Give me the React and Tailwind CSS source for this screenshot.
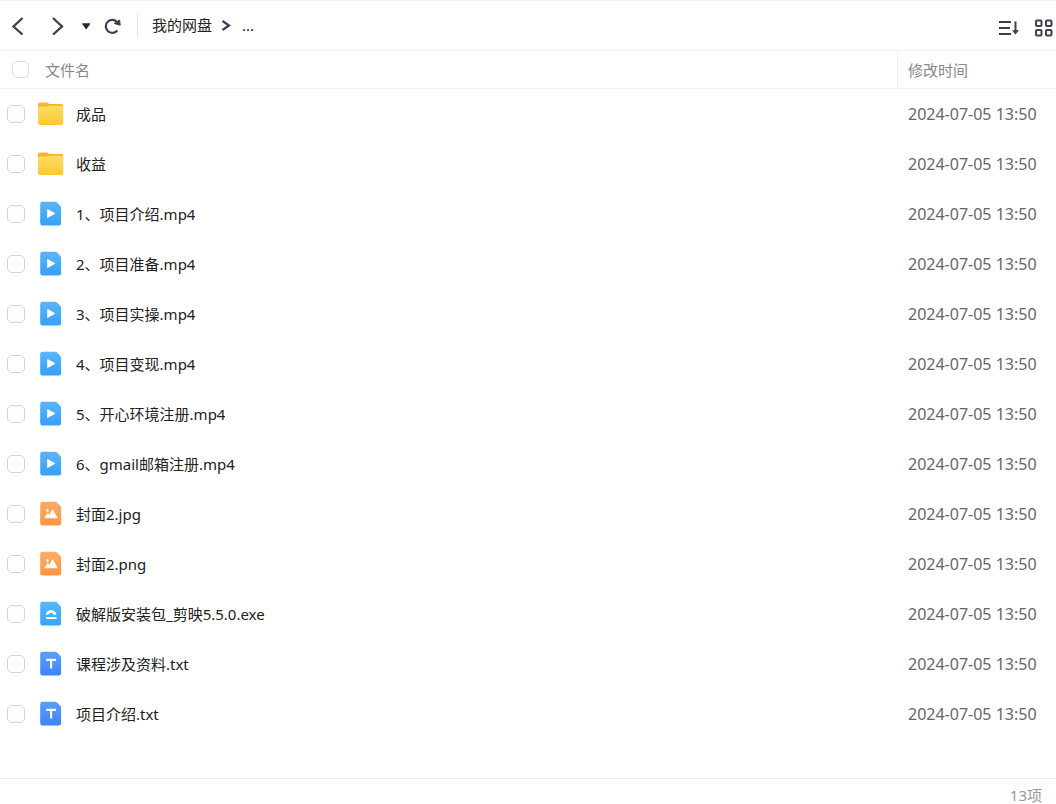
const files = [
    { name: "成品", type: "folder" },
    { name: "收益", type: "folder" },
    { name: "1、项目介绍.mp4", type: "video" },
    { name: "2、项目准备.mp4", type: "video" },
    { name: "3、项目实操.mp4", type: "video" },
    { name: "4、项目变现.mp4", type: "video" },
    { name: "5、开心环境注册.mp4", type: "video" },
    { name: "6、gmail邮箱注册.mp4", type: "video" },
    { name: "封面2.jpg", type: "image" },
    { name: "封面2.png", type: "image" },
    { name: "破解版安装包_剪映5.5.0.exe", type: "exe" },
    { name: "课程涉及资料.txt", type: "text" },
    { name: "项目介绍.txt", type: "text" },
];

const modified = "2024-07-05 13:50";

const pageColors = {
    video: ["#5ab5fd", "#36a0fa"],
    image: ["#ffac68", "#fd9343"],
    exe: ["#56b8ff", "#38a5fb"],
    text: ["#5b9dfb", "#3a86f6"],
};

const FolderIcon = () => (
    <svg className="h-7 w-7" viewBox="0 0 28 28" aria-hidden="true">
        <defs>
            <linearGradient id="folder" x1="0" y1="0" x2="0" y2="1">
                <stop offset="0" stopColor="#ffdc63" />
                <stop offset="1" stopColor="#fdc832" />
            </linearGradient>
        </defs>
        <path d="M3 2.500h6.600q1 0 1.700.7l.8.8h12q2 0 2 2V12H1V4.500q0-2 2-2Z" fill="#f3b527" />
        <path d="M1 8q0-1.500 1.400-1.500h7.200q.8 0 1.400-.4.600-.4 1.400-.4h11.900q1.900 0 1.900 1.900v15.200q0 2.200-2.200 2.200H3.200Q1 25 1 22.800Z" fill="url(#folder)" />
    </svg>
);

// A sheet with a cut corner, the glyph on it depends on the type
const PageIcon = ({ type }) => (
    <svg className="h-7 w-7" viewBox="0 0 28 28" aria-hidden="true">
        <defs>
            <linearGradient id={type} x1="0" y1="0" x2="0" y2="1">
                <stop offset="0" stopColor={pageColors[type][0]} />
                <stop offset="1" stopColor={pageColors[type][1]} />
            </linearGradient>
        </defs>
        <path d="M5.500 1.800h12.800q1 0 1.700.7l3.400 3.500q.7.700.7 1.700v15.300q0 2.500-2.500 2.500h-16Q3.200 25.500 3.200 23V4.200q0-2.400 2.300-2.400Z" fill={`url(#${type})`} />
        {type === "video" && <path d="M10.200 9.700v7.600q0 .9.800.4l6.800-3.700q.8-.5 0-1L11 9.300q-.8-.5-.8.400Z" fill="#fff" />}
        {type === "image" && (
            <g fill="#fff" opacity=".95">
                <circle cx="10.500" cy="10.500" r="1.400" />
                <path d="M8 18.200q-.8 0-.4-.7l2.600-4.200q.5-.7 1 0l1 1.400 2.900-5q.6-.8 1.100 0l4.200 7.800q.3.700-.5.700Z" />
            </g>
        )}
        {type === "exe" && (
            <g fill="none" stroke="#fff" strokeWidth="2" strokeLinejoin="round">
                <path d="M9 14.300h2.200a3 3 0 0 1 5.600 0H19a5.200 5.200 0 0 0-10 0Z" strokeWidth="1" fill="#fff" />
                <path d="M9 18h10.500" />
            </g>
        )}
        {type === "text" && <path d="M9.200 9.800h9.800M14.100 9.800v8.700" fill="none" stroke="#fff" strokeWidth="2.200" />}
    </svg>
);

const Checkbox = ({ label, className }) => (
    <input
        type="checkbox"
        aria-label={label}
        className={`${className} block shrink-0 appearance-none rounded-[5px] border bg-white checked:bg-blue-500`}
    />
);

const Toolbar = () => (
    <header className="flex h-[51px] shrink-0 items-center justify-between border-y border-[#f0f0f2] text-[#3b4150]">
        <nav className="flex items-center pb-0.5">
            <button type="button" aria-label="后退" className="ml-2 h-5 w-5">
                <svg viewBox="0 0 20 20" fill="none" stroke="currentColor" strokeWidth="2.300">
                    <path d="M14.500 3 5.500 11.500l9 8" />
                </svg>
            </button>
            <button type="button" aria-label="前进" className="ml-5 h-5 w-5">
                <svg viewBox="0 0 20 20" fill="none" stroke="currentColor" strokeWidth="2.300">
                    <path d="M5 3l9 8.500-9 8" />
                </svg>
            </button>
            <button type="button" aria-label="历史记录" className="ml-2 h-5 w-5 text-[#222631]">
                <svg viewBox="0 0 20 20" fill="currentColor">
                    <path d="M6.500 8.300h7.400q.6 0 .2.600l-3.300 4.900q-.6.700-1.200 0L6.300 8.900q-.4-.6.2-.6Z" />
                </svg>
            </button>
            <button type="button" aria-label="刷新" className="ml-1.5 h-5 w-5">
                <svg viewBox="0 0 20 20" fill="none" stroke="currentColor" strokeWidth="2.200">
                    <path d="M15.300 15.500a6.500 6.500 0 1 1 .2-8" />
                    <path d="M12.300 8.500 17.600 5l.6 5.200Z" fill="currentColor" stroke="currentColor" strokeWidth="1" strokeLinejoin="round" />
                </svg>
            </button>
            <span className="ml-[15px] h-6 w-px bg-[#e4e5e8]" />
            <a href="#root" className="ml-3.5 text-[15px] leading-6 text-[#222]">我的网盘</a>
            <svg className="mx-2 h-3.5 w-3.5" viewBox="0 0 14 14" fill="none" stroke="currentColor" strokeWidth="2.200">
                <path d="M2.500 3l6.500 4.500L2.500 12" />
            </svg>
            <a href="#up" className="text-[15px] leading-6 text-[#222]">...</a>
        </nav>
        <div className="flex items-center gap-3.5 pt-1">
            <button type="button" aria-label="排序" className="h-5 w-6">
                <svg viewBox="0 0 24 20" fill="none" stroke="currentColor" strokeWidth="2">
                    <path d="M3 4h12M3 10h11M3 16h12M19.500 3.500v10" />
                    <path d="M16 12.300h7l-3.500 4.200Z" fill="currentColor" stroke="none" />
                </svg>
            </button>
            <button type="button" aria-label="网格视图" className="mr-0.5 h-5 w-5">
                <svg viewBox="0 0 20 20" fill="none" stroke="currentColor" strokeWidth="2">
                    <rect x="2" y="2.500" width="5.500" height="5.500" rx="1" />
                    <rect x="12" y="2.500" width="5.500" height="5.500" rx="1" />
                    <rect x="2" y="12" width="5.500" height="5.500" rx="1" />
                    <rect x="12" y="12" width="5.500" height="5.500" rx="1" />
                </svg>
            </button>
        </div>
    </header>
);

export default function App() {
    return (
        <div className="flex h-screen flex-col overflow-hidden bg-white font-['Noto_Sans','Noto_Sans_CJK_SC',sans-serif]">
            <Toolbar />

            {/* FILE LIST */}
            <main className="min-h-0 flex-1 overflow-hidden">
                <table className="w-full table-fixed border-separate border-spacing-0 text-left">
                    <thead className="text-[15px] leading-6 text-[#888]">
                        <tr className="h-[38px]">
                            <th scope="col" className="border-b border-[#f0f0f2] p-0 font-normal">
                                <div className="flex items-center pl-3">
                                    <Checkbox label="全选" className="h-[17px] w-[17px] border-[#dedfe2]" />
                                    <span className="ml-4">文件名</span>
                                </div>
                            </th>
                            <th scope="col" className="w-[159px] border-b border-l border-[#f0f0f2] py-0 pr-0 pl-2.5 font-normal">
                                修改时间
                            </th>
                        </tr>
                    </thead>
                    <tbody>
                        {files.map((file) => (
                            <tr key={file.name} className="h-[50px]">
                                <td className="p-0">
                                    <div className="flex items-center pl-[7px]">
                                        <Checkbox label={file.name} className="h-[18px] w-[18px] border-[#cfd3da]" />
                                        <span className="mr-[11px] ml-3">
                                            {file.type === "folder" ? <FolderIcon /> : <PageIcon type={file.type} />}
                                        </span>
                                        <span className="truncate text-[15px] leading-6 text-[#222]">{file.name}</span>
                                    </div>
                                </td>
                                <td className="py-0 pr-0 pl-[11px] text-[16px] leading-6 whitespace-nowrap text-[#666]">{modified}</td>
                            </tr>
                        ))}
                    </tbody>
                </table>
            </main>

            <footer className="h-[26px] shrink-0 border-t border-[#ececee] pt-2 pr-3.5 text-right text-[15px] leading-4 text-[#999]">
                {files.length}项
            </footer>
        </div>
    );
}
